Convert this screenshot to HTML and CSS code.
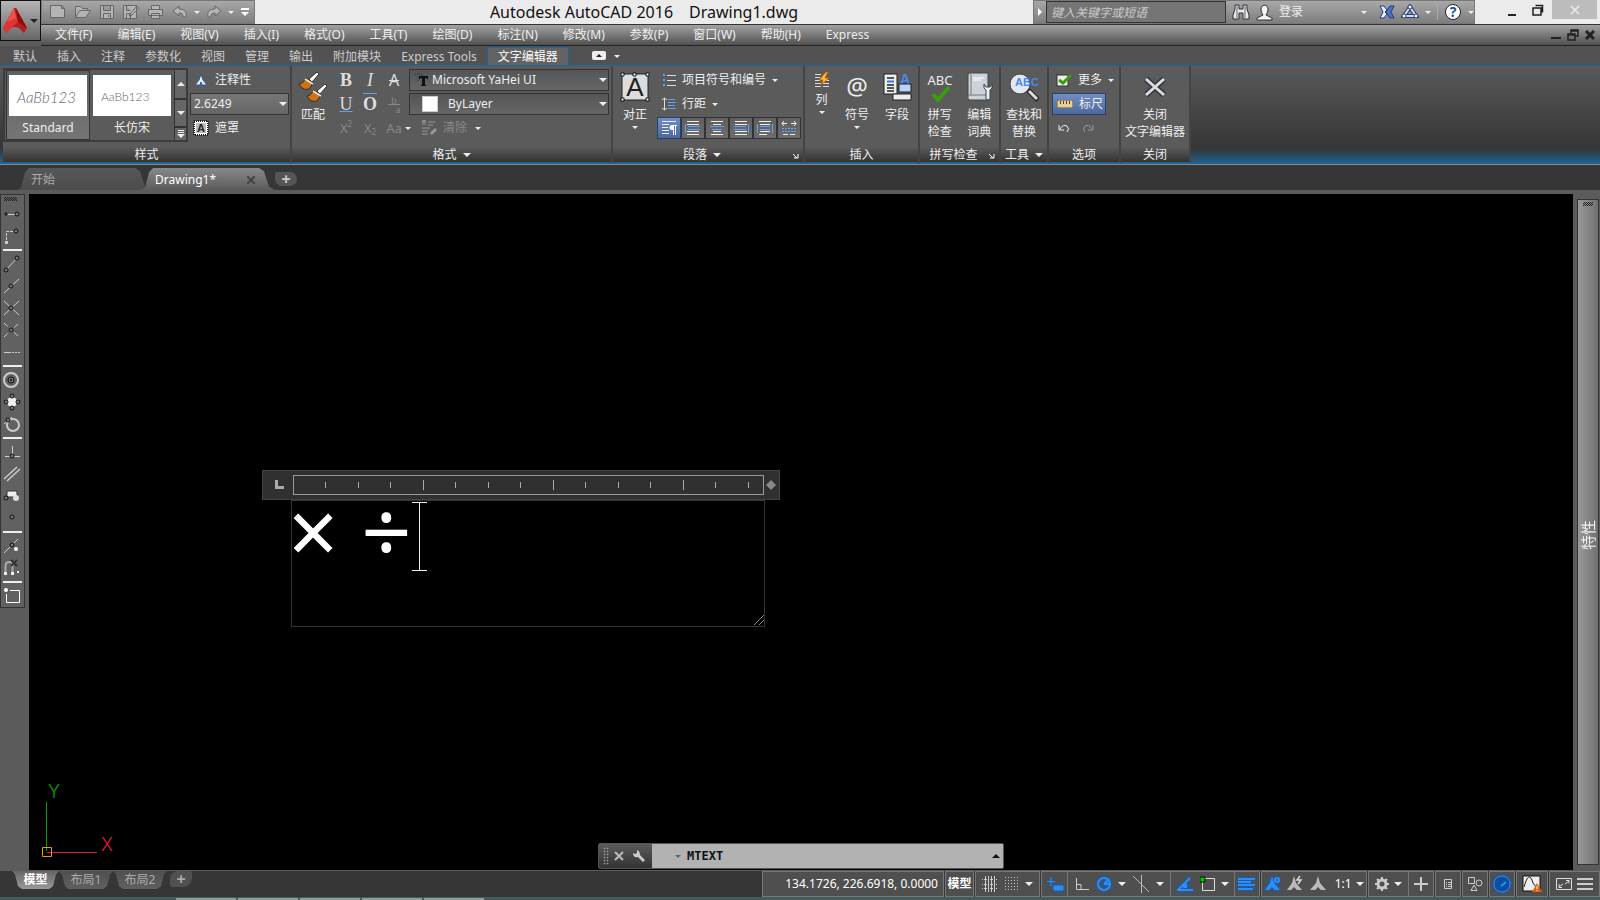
FILE: index.html
```html
<!DOCTYPE html>
<html lang="zh-CN">
<head>
    <meta charset="UTF-8">
    <title>Autodesk AutoCAD 2016 Drawing1.dwg</title>
    <link rel="stylesheet" href="styles.css">
</head>
<body>
<div class="app">
    <header class="top">
        <button class="app-button" aria-label="应用程序菜单">
            <svg width="24" height="26" viewBox="0 0 24 26"><path d="M11 0h2l11 20-3 5-5-5q-4-2-8 0l-5 5-3-5z" fill="#b81c1c"/><path d="M11 0L0 20l3 5 12-11z" fill="#de3434"/><path d="M11 0L4 14l9-4z" fill="#f05050"/><path d="M13 0l11 20-9-6z" fill="#8c0d0d"/></svg>
            <i class="caret dark"></i>
        </button>
        <div class="titlebar">
            <div class="quick">
                <button aria-label="新建"><svg width="18" height="16"><path d="M1.500 1.500h11l3 3v9h-14zM12.500 1.500v3h3" class="q"/></svg></button>
                <button aria-label="打开"><svg width="18" height="16"><path d="M1.500 13.500v-11h5l2 2h5v2M1.500 13.500l4-7h11l-5 7z" class="q"/></svg></button>
                <button aria-label="保存"><svg width="16" height="16"><path d="M1.500 1.500h13v13h-13zM4.500 1.500v5h7v-5M4.500 14.500v-5h7v5M9.500 11v2" class="q"/></svg></button>
                <button aria-label="另存为"><svg width="18" height="16"><path d="M1.500 1.500h13v13h-13zM4.500 1.500v5h4M4.500 14.500v-5h4v5M8 10l7-8 2 2-7 7-3 1z" class="q"/></svg></button>
                <button aria-label="打印"><svg width="18" height="16"><path d="M4.500 5.500v-4h8v4M1.500 5.500h14v6h-14zM4.500 9.500h8v5h-8z" class="q"/></svg></button>
                <button aria-label="放弃"><svg width="16" height="14"><path d="M1 6 7 1v3c6 0 8 3 7 8h-3c0-3-1-4-4-4v3z" class="q"/></svg></button>
                <i class="caret"></i>
                <button aria-label="重做"><svg width="16" height="14"><path d="M15 6 9 1v3C3 4 1 7 2 12h3c0-3 1-4 4-4v3z" class="q"/></svg></button>
                <i class="caret"></i>
                <button aria-label="自定义"><svg width="10" height="10"><path d="M1 1h8v2H1zM1 5h8L5 9z" fill="#fff"/></svg></button>
            </div>
            <h1 class="title"><span>Autodesk AutoCAD 2016</span><span>Drawing1.dwg</span></h1>
            <div class="info">
                <button class="info-toggle" aria-label="收拢"><svg width="6" height="10"><path d="M1 1l4 4-4 4z" fill="#fff"/></svg></button>
                <input class="search" type="text" placeholder="键入关键字或短语" aria-label="搜索">
                <button aria-label="查找"><svg width="18" height="18" viewBox="0 0 18 18"><path d="M3 2h4v4h4V2h4v4l2 6v4h-6v-6H7v6H1v-4l2-6z" fill="#e8e8e8" stroke="#2c3038"/><path d="M5 3v12M13 3v12" stroke="#667"/></svg></button>
                <button class="login"><svg width="17" height="17" viewBox="0 0 17 17"><path d="M5 5c0-5 7-5 7 0 0 3-1 4-2 6l6 3v2H1v-2l6-3C6 9 5 8 5 5z" fill="#f4f4f8" stroke="#2c3038"/></svg>登录</button>
                <i class="caret login-caret"></i>
                <button aria-label="Exchange"><svg width="16" height="16" viewBox="0 0 16 16"><path d="M1 2h4l3 4-2 2 2 2-3 4H1l3-6z" fill="#e6ecf8" stroke="#1f3c80"/><path d="M15 2h-4L7 8l4 6h4l-3-6z" fill="#4c74c4" stroke="#1f3c80"/></svg></button>
                <button aria-label="A360"><svg width="18" height="16" viewBox="0 0 18 16"><path d="M9 3 3 12h12z" fill="none" stroke="#243c74" stroke-width="4"/><path d="M9 3 3 12h12z" fill="none" stroke="#d8dcea" stroke-width="2"/><circle cx="9" cy="3" r="2" class="node"/><circle cx="3" cy="12" r="2" class="node"/><circle cx="15" cy="12" r="2" class="node"/></svg></button>
                <i class="caret"></i>
                <span class="divider"></span>
                <button aria-label="帮助"><svg width="18" height="18" viewBox="0 0 18 18"><circle cx="9" cy="9" r="7.500" fill="#fff" stroke="#223"/><text x="9" y="14" text-anchor="middle" class="help-mark">?</text></svg></button>
                <i class="caret"></i>
            </div>
            <div class="window-buttons">
                <button aria-label="最小化"><svg width="10" height="14"><path d="M1 11h8v2H1z" fill="#222"/></svg></button>
                <button aria-label="还原"><svg width="12" height="12"><path d="M1 4h8v7H1zM3.500 1.500h7v7" fill="none" stroke="#222" stroke-width="1.500"/></svg></button>
                <button class="close" aria-label="关闭"><svg width="10" height="10"><path d="M1 1l8 8M9 1l-8 8" stroke="#eee" stroke-width="1.500"/></svg></button>
            </div>
        </div>
        <nav class="menubar">
            <a href="#">文件(F)</a>
            <a href="#">编辑(E)</a>
            <a href="#">视图(V)</a>
            <a href="#">插入(I)</a>
            <a href="#">格式(O)</a>
            <a href="#">工具(T)</a>
            <a href="#">绘图(D)</a>
            <a href="#">标注(N)</a>
            <a href="#">修改(M)</a>
            <a href="#">参数(P)</a>
            <a href="#">窗口(W)</a>
            <a href="#">帮助(H)</a>
            <a href="#">Express</a>
            <div class="mdi">
                <button aria-label="最小化图形"><svg width="10" height="10"><path d="M0 7h10v2H0z" fill="#222"/></svg></button>
                <button aria-label="还原图形"><svg width="12" height="12"><path d="M1 5h7v6H1zM4 4V1h7v6H8M1 6h7M4 2h7" fill="none" stroke="#222" stroke-width="1.500"/></svg></button>
                <button aria-label="关闭图形"><svg width="10" height="10"><path d="M1 1l8 8M9 1l-8 8" stroke="#222" stroke-width="3"/></svg></button>
            </div>
        </nav>
    </header>

    <nav class="ribbon-tabs">
        <a href="#">默认</a>
        <a href="#">插入</a>
        <a href="#">注释</a>
        <a href="#">参数化</a>
        <a href="#">视图</a>
        <a href="#">管理</a>
        <a href="#">输出</a>
        <a href="#">附加模块</a>
        <a href="#">Express Tools</a>
        <a href="#" class="active">文字编辑器</a>
        <button class="minimize" aria-label="最小化功能区"><svg width="14" height="9"><rect width="14" height="9" rx="2" fill="#eee"/><path d="M4 6l3-3 3 3z" fill="#222"/></svg></button>
        <i class="caret"></i>
    </nav>

    <div class="ribbon">
        <section class="panel panel-style">
            <div class="body">
                <div class="gallery">
                    <button class="sample selected"><span class="preview slanted">AaBb123</span>Standard</button>
                    <button class="sample"><span class="preview narrow">AaBb123</span>长仿宋</button>
                    <div class="scroller">
                        <button aria-label="上一行"><i class="caret big up"></i></button>
                        <button aria-label="下一行"><i class="caret big"></i></button>
                        <button aria-label="展开"><svg width="8" height="8"><path d="M1 0h6v1H1zM1 2h6v1H1zM0 4h8L4 8z" fill="#eee"/></svg></button>
                    </div>
                </div>
                <div class="rows">
                    <button class="tool"><svg width="16" height="16" viewBox="0 0 16 16"><path d="M8 2l2 6 4 5H9l-1-3-1 3H2l4-5z" fill="#e4eefa" stroke="#2c5c94"/></svg>注释性</button>
                    <div class="combo"><select aria-label="文字高度"><option>2.6249</option></select></div>
                    <button class="tool"><svg width="16" height="16" viewBox="0 0 16 16"><rect x="1" y="1" width="14" height="14" fill="#fff" stroke="#222" stroke-dasharray="1 1" stroke-width="2"/><rect x="3" y="3" width="10" height="10" fill="#bbb"/><text x="8" y="12" text-anchor="middle" class="mask-letter">A</text></svg>遮罩</button>
                </div>
            </div>
            <h2>样式</h2>
        </section>

        <section class="panel panel-format">
            <div class="body">
                <button class="big-tool"><svg width="30" height="30" viewBox="0 0 30 30"><g id="brush"><path d="M19 0l2 2-7 8-3-3z" fill="#fff" stroke="#333"/><path d="M8 6l7 5-3 5c-4 3-8 1-11-4 3 0 5-3 7-6z" fill="#c8741a" stroke="#4a2808"/><path d="M7 7l8 5" stroke="#ddd" stroke-width="2"/></g><use href="#brush" x="8" y="12"/></svg><span>匹配</span></button>
                <div class="letters">
                    <button class="bold">B</button>
                    <button class="italic">I</button>
                    <button class="strike">A</button>
                    <button class="under">U</button>
                    <button class="over">O</button>
                    <button class="dim stack"><span>b</span><span>a</span></button>
                    <button class="dim">X<sup>2</sup></button>
                    <button class="dim">X<sub>2</sub></button>
                    <button class="dim">Aa</button>
                </div>
                <div class="rows">
                    <div class="combo font"><svg width="14" height="14" viewBox="0 0 14 14"><path d="M0 3V1h7v2M3 1v8" stroke="#333" stroke-dasharray="1 1" fill="none"/><path d="M4 3h9v3h-1l-1-1h-1v7h1v1H6v-1h1V5H6L5 6H4z" fill="#111"/></svg><select aria-label="字体"><option>Microsoft YaHei UI</option></select></div>
                    <div class="combo font color"><span class="swatch"></span><select aria-label="颜色"><option>ByLayer</option></select></div>
                    <div class="line dim"><i class="caret"></i><button class="tool"><svg width="16" height="16"><path d="M2 0v5M4 0v5M1 1h4M7 2h7M7 5h5M1 8h8M1 11h6M1 14h6" stroke="#999" fill="none"/><path d="M9 13l5-5 2 2-5 5z" fill="#999"/></svg>清除</button><i class="caret"></i></div>
                </div>
            </div>
            <h2>格式 <i class="caret big"></i></h2>
        </section>

        <section class="panel panel-para">
            <div class="body">
                <button class="big-tool"><svg width="30" height="30" viewBox="0 0 30 30"><rect x="2" y="2" width="26" height="26" fill="#ddd" stroke="#222"/><text x="15" y="24" text-anchor="middle" class="justify-letter">A</text><path d="M1 1h3v3H1zM13 1h3v3h-3zM26 1h3v3h-3zM1 26h3v3H1zM26 26h3v3h-3z" fill="#fff" stroke="#111"/></svg><span>对正</span><i class="caret"></i></button>
                <div class="rows">
                    <button class="tool"><svg width="14" height="14"><path d="M1 2h2M1 7h2M1 12h2" stroke="#63a0f0" stroke-width="2"/><path d="M5 2.500h9M5 7.500h9M5 12.500h9" stroke="#ddd"/></svg>项目符号和编号 <i class="caret"></i></button>
                    <button class="tool"><svg width="14" height="14"><path d="M2.500 1v12M0 3l2.500-2L5 3M0 11l2.500 2L5 11" stroke="#ddd" fill="none"/><path d="M6 2.500h7M6 5.500h8M6 8.500h7M6 11.500h8" stroke="#63a0f0"/></svg>行距 <i class="caret"></i></button>
                    <div class="aligns">
                        <button class="on" aria-label="默认"><svg width="16" height="16"><path d="M1 1.500h14M1 4.500h7M1 7.500h6M1 10.500h7M1 13.500h7" stroke="#eee"/><path d="M11 5h2v5h-2a2 2 0 0 1 0-5z" fill="#fff"/><path d="M10 5.500h6M12.500 6v9M14.500 6v9" stroke="#fff" fill="none"/></svg></button>
                        <button aria-label="左对齐"><svg width="16" height="16"><path d="M2 1.500h12M2 4.500h12M2 11.500h12M2 14.500h12" stroke="#eee"/><path d="M.500 4v9M3 6.500h12M3 9.500h12" stroke="#63a0f0"/></svg></button>
                        <button aria-label="居中"><svg width="16" height="16"><path d="M2 1.500h12M4 4.500h8M4 11.500h8M2 14.500h12" stroke="#eee"/><path d="M1 6.500h14M3 9.500h10" stroke="#63a0f0"/></svg></button>
                        <button aria-label="右对齐"><svg width="16" height="16"><path d="M2 1.500h12M2 4.500h12M2 11.500h12M2 14.500h12" stroke="#eee"/><path d="M15.500 4v9M1 6.500h12M1 9.500h12" stroke="#63a0f0"/></svg></button>
                        <button aria-label="对正"><svg width="16" height="16"><path d="M2 1.500h12M3 4.500h10M3 11.500h10M2 14.500h8" stroke="#eee"/><path d="M.500 4v9M15.500 4v9M3 6.500h10M3 9.500h10" stroke="#63a0f0"/></svg></button>
                        <button aria-label="分散对齐"><svg width="16" height="16"><path d="M1 3.500h5M10 3.500h5M3 1L1 3.500 3 6M13 1l2 2.500L13 6M2 14.500h5M9 14.500h5" stroke="#eee" fill="none"/><path d="M1 8.500h14M1 11.500h14" stroke="#63a0f0" stroke-dasharray="2 1"/></svg></button>
                    </div>
                </div>
            </div>
            <h2>段落 <i class="caret big"></i><svg class="launcher" width="6" height="6"><path d="M0 1l4 4M5 1v4H1" stroke="#fff" fill="none"/></svg></h2>
        </section>

        <section class="panel panel-insert">
            <div class="body">
                <button class="big-tool short"><svg width="16" height="16"><path d="M1 2.500h6M1 5.500h5M1 8.500h5M1 11.500h6M1 14.500h6M10 8.500h5M9 11.500h6M9 14.500h6" stroke="#ddd"/><path d="M12 0L5 8h4l-2 5 8-7h-4l3-6z" fill="#ffc040" stroke="#c86000"/></svg><span>列</span><i class="caret"></i></button>
                <button class="big-tool"><span class="at">@</span><span>符号</span><i class="caret"></i></button>
                <button class="big-tool"><svg width="30" height="30" viewBox="0 0 30 30"><rect x="2" y="2" width="13" height="20" fill="#eee" stroke="#222"/><path d="M5 6h7M5 13h7M5 16h7M5 19h7" stroke="#555" stroke-width="2"/><path d="M5 9.500h7" stroke="#3878e0" stroke-width="2"/><text x="23" y="12" text-anchor="middle" class="field-letter">A</text><path d="M17 12h12v8H17z" fill="#b8d4f8" stroke="#222"/><path d="M11 22h18v6H11z" fill="#eee" stroke="#222"/></svg><span>字段</span></button>
            </div>
            <h2>插入</h2>
        </section>

        <section class="panel panel-spell">
            <div class="body">
                <button class="big-tool"><svg width="30" height="30" viewBox="0 0 30 30"><text x="15" y="13" text-anchor="middle" class="abc">ABC</text><path d="M8 22l5 6L24 15" stroke="#3a9a10" stroke-width="4" fill="none"/></svg><span>拼写<br>检查</span></button>
                <button class="big-tool"><svg width="30" height="30" viewBox="0 0 30 30"><path d="M4 3q0-2 2-2h18v27H6q-3 0-2-3z" fill="#ccd2da" stroke="#444"/><path d="M4 25q0-2 2-2h18M7 2v21" stroke="#777" fill="none"/><path d="M9 6h11M9 8h8" stroke="#fff"/><path d="M20 12v4l2 2v9q2 2 4 0v-9l2-2v-4l-2 3h-4z" fill="#eee" stroke="#345"/></svg><span>编辑<br>词典</span></button>
            </div>
            <h2>拼写检查<svg class="launcher" width="6" height="6"><path d="M0 1l4 4M5 1v4H1" stroke="#fff" fill="none"/></svg></h2>
        </section>

        <section class="panel panel-tools">
            <div class="body">
                <button class="big-tool"><svg width="30" height="30" viewBox="0 0 30 30"><path d="M19 18l10 10" stroke="#222" stroke-width="5"/><path d="M20 19l8 8" stroke="#ddd" stroke-width="3"/><circle cx="11" cy="12" r="10" fill="#e2e8ee" stroke="#444"/><text x="18" y="14" text-anchor="middle" class="find-letters">ABC</text></svg><span>查找和<br>替换</span></button>
            </div>
            <h2>工具 <i class="caret big"></i></h2>
        </section>

        <section class="panel panel-options">
            <div class="body">
                <div class="rows">
                    <button class="tool"><svg width="16" height="14"><rect x="1" y="2" width="11" height="11" fill="#eee" stroke="#333"/><path d="M3 7l4 3 8-8" stroke="#3a9a10" stroke-width="3" fill="none"/></svg>更多 <i class="caret"></i></button>
                    <button class="tool on"><svg width="16" height="8"><rect width="16" height="8" fill="#e8cf98" stroke="#634b20"/><path d="M3.500 1v3M6.500 1v3M9.500 1v3M12.500 1v3" stroke="#543"/></svg>标尺</button>
                    <div class="line undo">
                        <button aria-label="放弃"><svg width="12" height="10"><path d="M1 2v5h5M2 6q3-5 7-3 3 3 0 6" stroke="#eee" fill="none"/></svg></button>
                        <button class="dim" aria-label="重做"><svg width="12" height="10"><path d="M11 2v5H6M10 6Q7 1 3 3 0 6 3 9" stroke="#999" fill="none"/></svg></button>
                    </div>
                </div>
            </div>
            <h2>选项</h2>
        </section>

        <section class="panel panel-close">
            <div class="body">
                <button class="big-tool"><svg width="30" height="30" viewBox="0 0 30 30"><path d="M6 7l18 16M24 7L6 23" stroke="#333840" stroke-width="6"/><path d="M6 7l18 16M24 7L6 23" stroke="#ddd" stroke-width="3"/></svg><span>关闭<br>文字编辑器</span></button>
            </div>
            <h2>关闭</h2>
        </section>
    </div>

    <nav class="file-tabs">
        <a href="#" class="file-tab">开始</a>
        <a href="#" class="file-tab active">Drawing1*<svg width="8" height="8"><path d="M0 0l8 8M8 0L0 8" stroke="#444" stroke-width="2"/></svg></a>
        <button class="new-tab" aria-label="新图形">+</button>
    </nav>

    <main class="workspace">
        <aside class="snap-bar">
            <span class="grip"></span>
            <button aria-label="临时追踪点"><svg width="18" height="18"><path d="M3 9.500h9" class="s"/><path d="M2 8h2v2H2z" class="n"/><circle cx="14" cy="9" r="2" class="n"/></svg></button>
            <button aria-label="捕捉自"><svg width="18" height="18"><path d="M3.500 13V4.500H12" class="s" stroke-dasharray="3 1"/><path d="M2 14h3v3H2z" fill="#ccc"/><circle cx="13" cy="4" r="2" class="n"/></svg></button>
            <hr>
            <button aria-label="端点"><svg width="18" height="18"><path d="M3 15L14 3" class="s"/><circle cx="3" cy="15" r="2" class="n"/><circle cx="14" cy="3" r="2" class="n"/></svg></button>
            <button aria-label="中点"><svg width="18" height="18"><path d="M1 16L16 2" class="s"/><circle cx="8" cy="9" r="2" class="n"/></svg></button>
            <button aria-label="交点"><svg width="18" height="18"><path d="M1 2l15 14M1 16L16 2" class="s"/><circle cx="8" cy="9" r="2" class="n"/></svg></button>
            <button aria-label="外观交点"><svg width="18" height="18"><path d="M1 2l15 14M1 16L16 2" class="s" stroke-dasharray="5 2"/><circle cx="8" cy="9" r="2" class="n"/></svg></button>
            <button aria-label="延长线"><svg width="18" height="18"><path d="M1 9.500h7M9 9.500h2M12 9.500h2M15 9.500h2" class="s"/></svg></button>
            <hr>
            <button aria-label="圆心"><svg width="18" height="18"><circle cx="8" cy="9" r="7" class="s" stroke-width="2"/><circle cx="8" cy="9" r="3" class="n"/><circle cx="8" cy="9" r="1" fill="#000"/></svg></button>
            <button aria-label="象限点"><svg width="18" height="18"><circle cx="9" cy="9" r="5" fill="#eee"/><circle cx="9" cy="3" r="2" class="n"/><circle cx="9" cy="15" r="2" class="n"/><circle cx="3" cy="9" r="2" class="n"/><circle cx="15" cy="9" r="2" class="n"/></svg></button>
            <button aria-label="切点"><svg width="18" height="18"><circle cx="10" cy="10" r="6" class="s" stroke-width="2"/><path d="M1 9l8-7" class="s"/><circle cx="5" cy="5" r="2" class="n"/></svg></button>
            <hr>
            <button aria-label="垂足"><svg width="18" height="18"><path d="M9.500 3v10M2 13.500h15" class="s"/><circle cx="9" cy="13" r="2" class="n"/></svg></button>
            <button aria-label="平行线"><svg width="18" height="18"><path d="M1 14L14 2M4 16L17 4" class="s" stroke-width="1.500"/></svg></button>
            <button aria-label="插入点"><svg width="18" height="18"><path d="M4 4h10v6H4z" fill="#eee" stroke="#333"/><circle cx="3" cy="11" r="2" class="n"/><circle cx="13" cy="11" r="3" fill="#ddd"/></svg></button>
            <button aria-label="节点"><svg width="18" height="18"><circle cx="9" cy="8" r="2" class="n"/></svg></button>
            <hr>
            <button aria-label="最近点"><svg width="18" height="18"><path d="M1 16L15 2" class="s"/><circle cx="9" cy="8" r="2" class="n"/><circle cx="13" cy="12" r="2" fill="#fff"/></svg></button>
            <button aria-label="无捕捉"><svg width="18" height="18"><path d="M2.500 15V7q0-4 4-4M9.500 15V7q0-4-3-4" stroke="#aaa" stroke-width="2" fill="none"/><path d="M1 13h3v3H1zM8 13h3v3H8zM14 12h2v2h-2z" fill="#eee"/><path d="M8 1l6 6M14 1L8 7" stroke="#333" stroke-width="2"/></svg></button>
            <hr>
            <button aria-label="对象捕捉设置"><svg width="18" height="18"><path d="M7 3.500h9.500v12H3.500V7" class="bright"/><circle cx="3" cy="3" r="2" fill="#fff"/></svg></button>
        </aside>

        <div class="canvas">
            <div class="mtext">
                <div class="ruler">
                    <svg width="10" height="10"><path d="M1 0v9h9V6H4V0z" fill="#aaa"/></svg>
                    <div class="scale"></div>
                    <svg width="10" height="10"><path d="M5 0l5 5-5 5-5-5z" fill="#888"/></svg>
                </div>
                <textarea class="editor" aria-label="多行文字" spellcheck="false">× ÷</textarea>
                <svg class="text-cursor" width="15" height="69"><path d="M0 .500h15M0 68.500h15M7.500 0v69" stroke="#eee"/></svg>
                <svg class="grow" width="10" height="10"><path d="M0 10L10 0M5 10l5-5" stroke="#888"/></svg>
            </div>

            <svg class="ucs" width="80" height="90" viewBox="0 -10 80 90">
                <path d="M7.500 19v49" stroke="#00a000"/>
                <path d="M8 69.500h50" stroke="#e02020"/>
                <path d="M3.500 64.500h9v9h-9z" stroke="#e8a000" fill="none"/>
                <text x="15" y="15" text-anchor="middle" fill="#00a000">Y</text>
                <text x="68" y="68" text-anchor="middle" fill="#e02020">X</text>
            </svg>

            <div class="command">
                <span class="grip"></span>
                <button aria-label="关闭命令行"><svg width="10" height="10"><path d="M1 1l8 8M9 1L1 9" stroke="#bbb" stroke-width="2"/></svg></button>
                <button aria-label="自定义"><svg width="14" height="14"><path d="M5 1v3L3 5 1 4q0 5 5 4l5 5 2-2-5-5q0-4-3-5z" fill="#ccc"/></svg></button>
                <div class="prompt">
                    <i class="caret"></i>
                    <input type="text" value="MTEXT" aria-label="命令">
                    <i class="caret big up"></i>
                </div>
            </div>
        </div>

        <aside class="palette">
            <span class="grip"></span>
            <span class="palette-title">特性</span>
        </aside>
    </main>

    <footer class="status">
        <nav class="layouts">
            <a href="#" class="active">模型</a>
            <a href="#">布局1</a>
            <a href="#">布局2</a>
            <button class="add-layout" aria-label="新建布局">+</button>
        </nav>
        <div class="cell coords">134.1726, 226.6918, 0.0000</div>
        <div class="cell"><button class="model">模型</button></div>
        <div class="cell">
            <button aria-label="栅格"><svg width="16" height="16"><path d="M3.500 0v16M6.500 0v16M9.500 0v16M12.500 0v16" stroke="#ccc"/><path d="M0 3.500h16M0 8.500h16M0 12.500h16" stroke="#ccc" stroke-dasharray="1 1"/></svg></button>
            <button aria-label="捕捉"><svg width="16" height="16"><path d="M1 1.500h14M1 4.500h14M1 7.500h14M1 10.500h14M1 13.500h14" stroke="#ccc" stroke-dasharray="1 2"/></svg></button>
            <i class="caret big"></i>
        </div>
        <div class="cell joined">
            <button class="lit" aria-label="动态输入"><svg width="18" height="16"><path d="M5 1v9M1 5.500h8M8 10h9v4H8z" stroke="#2690ff" fill="#2690ff"/></svg></button>
        </div>
        <div class="cell joined snaps">
            <button aria-label="正交"><svg width="16" height="16"><path d="M2.500 2v11.500H15M3 8.500h4v5" stroke="#ccc" fill="none"/></svg></button>
            <button class="lit" aria-label="极轴"><svg width="16" height="16"><circle cx="8" cy="8" r="6" class="b"/><path d="M8 8h7M8 8l5-5" class="b"/></svg></button>
            <i class="caret big"></i>
            <button aria-label="等轴测"><svg width="18" height="18"><path d="M9.500 0v18M1 1l16 16" stroke="#bbb"/></svg></button>
            <i class="caret big"></i>
        </div>
        <div class="cell joined osnap">
            <button class="lit" aria-label="对象捕捉追踪"><svg width="18" height="16"><path d="M2 14L14 2M1 14h16" class="b"/><path d="M7 8h4v4H7z" fill="#2690ff"/></svg></button>
            <button aria-label="对象捕捉"><svg width="16" height="16"><path d="M2.500 2.500h12v12h-12z" stroke="#ddd" fill="none"/><path d="M0 1h5v5H0z" fill="#00c800" stroke="#111"/></svg></button>
            <i class="caret big"></i>
        </div>
        <div class="cell">
            <button class="lit" aria-label="线宽"><svg width="18" height="14"><path d="M0 2h17M0 5h13M0 8h17M0 12h15" class="b"/></svg></button>
        </div>
        <div class="cell notes">
            <button class="lit" aria-label="注释可见性"><svg width="18" height="18"><path d="M8 1l2 7 6 7h-5l-3-3-3 3H1l5-7z" fill="#2690ff"/><circle cx="13" cy="5" r="2" class="b"/></svg></button>
            <button aria-label="自动缩放"><svg width="18" height="18"><path d="M8 1l2 7 6 7h-5l-3-3-3 3H1l5-7z" fill="#bbb"/><path d="M14 1l-3 4h4l-3 4" stroke="#ddd" stroke-width="1.500" fill="none"/></svg></button>
            <button aria-label="注释比例"><svg width="18" height="18"><path d="M9 1l2 7 6 7h-5l-3-3-3 3H1l6-7z" fill="#bbb"/></svg></button>
            <button class="ratio">1:1</button>
            <i class="caret big"></i>
        </div>
        <div class="cell joined"><button aria-label="切换工作空间"><svg width="14" height="14"><circle cx="7" cy="7" r="4" fill="none" stroke="#ccc" stroke-width="3"/><path d="M7 0v3M7 11v3M0 7h3M11 7h3M2 2l2 2M10 10l2 2M12 2l-2 2M4 10l-2 2" stroke="#ccc" stroke-width="2"/></svg></button><i class="caret big"></i></div>
        <div class="cell"><button aria-label="注释监视器"><svg width="14" height="14"><path d="M7 0v14M0 7h14" stroke="#ccc" stroke-width="2"/></svg></button></div>
        <div class="cell"><button aria-label="快捷特性"><svg width="10" height="12"><path d="M1.500 1.500h7v9h-7zM3 4.500h1M5 4.500h3M3 6.500h1M5 6.500h3M3 8.500h1M5 8.500h3" stroke="#ccc" fill="none"/></svg></button></div>
        <div class="cell"><button aria-label="隔离对象"><svg width="16" height="16"><path d="M1.500 1.500h6v6h-6zM4 14.500h6L7 9z" stroke="#ccc" fill="none"/><circle cx="12" cy="7" r="3" stroke="#ccc" fill="none"/></svg></button></div>
        <div class="cell"><button class="lit" aria-label="硬件加速"><svg width="18" height="18"><circle cx="9" cy="9" r="8" fill="#0d4e9c" stroke="#2690ff"/><path d="M8 11l5-4" class="b"/></svg></button></div>
        <div class="cell wide"><button aria-label="系统监视"><svg width="20" height="18"><rect x="1" y="1" width="17" height="15" fill="#eee" stroke="#111"/><path d="M2 12q5-18 9-4l3 4" stroke="#222" fill="none"/><path d="M15 8l5 9H10z" fill="#e06010"/><path d="M15 11v3M15 15v1" stroke="#fff"/></svg></button></div>
        <div class="cell last"><button aria-label="全屏显示"><svg width="16" height="12"><path d="M.500 .500h15v11H.500zM9 6l4-3M10 2.500h3v3M7 6L3 9M3 6v3.500h3" stroke="#ddd" fill="none"/></svg></button><button aria-label="自定义"><svg width="16" height="14"><path d="M0 2h16M0 7h16M0 12h16" stroke="#ccc" stroke-width="2"/></svg></button></div>
    </footer>
    <div class="taskbar"><span></span><span></span><span></span><span></span><span></span></div>
</div>
</body>
</html>
```

FILE: styles.css
```css
* {
    box-sizing: border-box;
}

body {
    margin: 0;
    font: 12px/16px "Noto Sans", "Noto Sans CJK SC", sans-serif;
    color: #eee;
    background-color: #5b5b5b;
}

button,
input,
select,
textarea {
    font: inherit;
    color: inherit;
    background: none;
    border: 0;
    padding: 0;
    margin: 0;
    border-radius: 0;
}

button {
    display: flex;
    align-items: center;
    justify-content: center;
    white-space: nowrap;
}

a {
    color: inherit;
    text-decoration: none;
    white-space: nowrap;
}

svg {
    display: block;
    flex: none;
}

.app {
    display: flex;
    flex-direction: column;
    height: 100vh;
    overflow: hidden;
}

.caret {
    flex: none;
    border: 3px solid transparent;
    border-top-color: #eee;
    border-bottom: 0;
}

.caret.big {
    border-width: 4px;
    border-bottom: 0;
}

.caret.up {
    border-top: 0;
    border-bottom: 4px solid #eee;
}

.caret.dark {
    border-width: 4px 4px 0;
    border-top-color: #222;
}

.grip {
    background: repeating-conic-gradient(#222 0 25%, transparent 0 50%) 0 0 / 2px 2px;
}

/* Title bar and menu */
.top {
    display: grid;
    grid-template: 24px 22px / 41px 1fr;
}

.app-button {
    grid-row: 1 / 3;
    align-self: start;
    height: 41px;
    border: 1px solid #111;
    background: linear-gradient(#b5b5b5, #666);
    gap: 3px;
}

.titlebar {
    display: flex;
    background-color: #ebebeb;
}

.quick,
.info {
    display: flex;
    align-items: center;
    background: linear-gradient(#a8a8a8, #7e7e7e);
    border: 1px solid #777;
}

.quick {
    width: 214px;
    padding-left: 7px;
    gap: 7px;
}

.quick .caret {
    margin: 0 -1px;
}

.q {
    fill: #b4b4b4;
    stroke: #666;
}

.title {
    flex: 1;
    display: flex;
    justify-content: center;
    gap: 16px;
    margin: 0;
    font-size: 16px;
    font-weight: 400;
    line-height: 25px;
    color: #111;
}

.info {
    width: 442px;
    gap: 6px;
}

.info-toggle {
    width: 12px;
    margin-right: -6px;
}

.search {
    width: 180px;
    height: 22px;
    padding-left: 4px;
    border: 1px solid #333;
    background-color: #757575;
    font-style: italic;
}

.search::placeholder {
    color: #ccc;
}

.info .login {
    gap: 6px;
}

.login-caret {
    margin: 0 6px 0 auto;
}

.node {
    fill: #fff;
    stroke: #243c74;
}

.help-mark {
    font: bold 14px "Noto Sans", sans-serif;
    fill: #1850b0;
}

.divider {
    width: 1px;
    height: 16px;
    background-color: #aaa;
}

.window-buttons {
    display: flex;
    width: 122px;
    height: 19px;
    justify-content: flex-end;
    gap: 15px;
    margin-right: 3px;
}

.window-buttons .close {
    width: 45px;
    margin-left: -7px;
    background-color: #bcbcbc;
}

.menubar {
    display: flex;
    align-items: center;
    padding-left: 2px;
    border-top: 1px solid #333;
    border-bottom: 1px solid #222;
    background: linear-gradient(#a2a2a2, #505050);
}

.menubar a {
    padding: 0 13px 0 12px;
}

.mdi {
    display: flex;
    gap: 6px;
    margin-left: auto;
    padding-right: 5px;
}

/* Ribbon */
.ribbon-tabs {
    display: flex;
    align-items: flex-end;
    height: 20px;
    padding-left: 3px;
    border-bottom: 1px solid #1f6496;
    background-color: #525252;
    color: #ccc;
}

.ribbon-tabs a {
    padding: 0 10px;
    line-height: 17px;
}

.ribbon-tabs a.active {
    border: 1px solid #1f6496;
    border-bottom: 0;
    background-color: #636363;
    color: #fff;
}

.ribbon-tabs > .caret {
    margin-bottom: 7px;
}

.minimize {
    margin: 0 8px 5px 23px;
}

.ribbon {
    display: flex;
    height: 99px;
    padding-left: 3px;
    border-bottom: 1px solid #888;
    background: linear-gradient(#5a5a5a, #353535 84%, #1f6496);
}

.panel {
    display: flex;
    flex-direction: column;
    border-right: 2px solid #444;
    border-bottom: 2px solid #1f6496;
    background-color: #5b5b5b;
}

.panel .body {
    display: flex;
    height: 81px;
    padding-top: 2px;
}

.panel h2 {
    flex: 1;
    display: flex;
    align-items: center;
    justify-content: center;
    position: relative;
    gap: 6px;
    margin: 0;
    font-size: 12px;
    font-weight: 400;
    line-height: 14px;
    background: linear-gradient(#5b5b5b, #333);
}

.panel-para h2,
.panel-spell h2 {
    padding-right: 12px;
}

.launcher {
    position: absolute;
    right: 4px;
    bottom: 3px;
}

.panel-style { width: 289px; }
.panel-format { width: 321px; }
.panel-para { width: 192px; }
.panel-insert { width: 115px; }
.panel-spell { width: 81px; }
.panel-tools { width: 48px; }
.panel-options { width: 72px; }
.panel-close { width: 70px; }

.gallery {
    display: flex;
    width: 185px;
    height: 74px;
    padding-left: 1px;
    border: 2px solid #3c3c3c;
}

.sample {
    flex-direction: column;
    justify-content: flex-start;
    width: 84px;
    padding-top: 5px;
    gap: 4px;
}

.sample.selected {
    border: 1px solid #333;
    background: linear-gradient(#606060, #757575);
    padding-top: 4px;
}

.preview {
    width: 78px;
    height: 41px;
    padding-left: 8px;
    background-color: #fff;
    color: #666;
    text-align: left;
    line-height: 44px;
}

.slanted {
    font-family: Lato, sans-serif;
    font-style: italic;
    font-weight: 300;
    font-size: 15px;
}

.narrow {
    font-family: Lato, sans-serif;
    font-size: 12px;
    font-weight: 300;
}

.scroller {
    flex: 1;
    display: grid;
    grid-template-rows: 28px 28px 1fr;
    background-color: #666;
    border-left: 1px solid #333;
}

.scroller button + button {
    border-top: 2px solid #333;
}

.rows {
    flex: 1;
    display: grid;
    grid-template-rows: repeat(3, 24px);
    align-items: center;
}

.tool {
    gap: 6px;
    justify-content: flex-start;
}

.panel-style .rows {
    padding: 0 1px 0 2px;
}

.panel-style .tool {
    padding-left: 3px;
}

.combo {
    display: flex;
    align-items: center;
    position: relative;
    height: 22px;
    border: 1px solid #333;
    background: linear-gradient(#777, #666);
}

.combo select {
    flex: 1;
    appearance: none;
    padding-left: 3px;
}

.combo::after {
    content: "";
    margin-right: 1px;
    border: 4px solid transparent;
    border-top-color: #eee;
    border-bottom: 0;
}

.combo.font {
    padding-left: 5px;
    background: linear-gradient(#555, #666);
}

.combo.color {
    padding-left: 12px;
}

.combo.color select {
    padding-left: 10px;
}

.swatch {
    width: 16px;
    height: 16px;
    background-color: #fff;
    border: 1px solid #ccc;
}

.big-tool {
    flex: 1;
    flex-direction: column;
    justify-content: flex-start;
    padding-top: 4px;
    line-height: 17px;
    text-align: center;
}

.big-tool > span:not(.at) {
    margin-top: 4px;
}

.big-tool .caret {
    margin-top: 3px;
}

.big-tool.short > span {
    margin-top: 3px;
}

.panel-insert .big-tool {
    flex: 0 0 38px;
}

.panel-insert .big-tool.short {
    flex-basis: 33px;
}

.panel-insert .big-tool:last-child {
    flex-basis: 42px;
}

.at {
    height: 30px;
    font-size: 24px;
    line-height: 28px;
}

.panel-format .big-tool {
    flex: 0 0 42px;
}

.letters {
    display: grid;
    grid-template: repeat(3, 24px) / repeat(3, 24px);
    width: 75px;
    font-size: 13px;
}

.letters .bold,
.letters .italic,
.letters .strike,
.letters .under,
.letters .over {
    font: bold 18px/20px "Liberation Serif", serif;
    color: #ddd;
}

.letters .italic {
    font-style: italic;
    font-weight: 400;
}

.letters .strike {
    font-family: "Noto Sans", sans-serif;
    font-size: 16px;
    font-weight: 400;
    text-decoration: line-through;
}

.letters .under {
    font-weight: 400;
    text-decoration: underline #63a0f0;
}

.letters .over {
    text-decoration: overline #63a0f0;
}

.letters sup,
.letters sub {
    font-size: 8px;
    line-height: 8px;
}

.letters sup {
    margin-bottom: 8px;
}

.letters sub {
    margin-top: 8px;
}

.dim {
    color: #888;
}

.letters .stack {
    flex-direction: column;
    font: 11px/8px "Liberation Serif", serif;
}

.stack span + span {
    padding-left: 8px;
    border-top: 1px solid #888;
}

.panel-format .rows {
    padding-right: 2px;
}

.line {
    display: flex;
    align-items: center;
    gap: 7px;
}

.line.dim {
    gap: 8px;
}

.line.dim .caret:first-child {
    margin: 0 2px 0 -4px;
}

.panel-para .big-tool {
    flex: 0 0 44px;
}

.panel-para .tool {
    padding-left: 5px;
}

.aligns {
    display: grid;
    grid-template-columns: repeat(6, 24px);
    height: 22px;
}

.aligns button {
    border: 1px solid #333;
    background: linear-gradient(#606060, #6c6c6c);
}

.aligns .on,
.tool.on {
    background: linear-gradient(#6f8fc4, #4c689c);
    border: 1px solid #28406c;
}

.abc {
    font: 13px "Noto Sans", sans-serif;
    fill: #eee;
}

.mask-letter {
    font: bold 11px "Liberation Sans", sans-serif;
    fill: #222;
}

.justify-letter {
    font: 26px "Liberation Sans", sans-serif;
    fill: #222;
}

.field-letter {
    font: bold 14px "Liberation Sans", sans-serif;
    fill: #4888f0;
}

.find-letters {
    font: bold 11px "Liberation Sans", sans-serif;
    fill: #4888f0;
}

.panel-options .rows {
    padding-left: 3px;
}

.panel-options .tool {
    padding-left: 4px;
}

.tool.on {
    width: 54px;
    height: 22px;
}

.undo {
    padding-left: 6px;
    gap: 12px;
}

/* File tabs */
.file-tabs {
    display: flex;
    align-items: flex-end;
    height: 29px;
    padding-left: 17px;
    border-bottom: 4px solid #5b5b5b;
    background-color: #363636;
}

.file-tab {
    display: flex;
    align-items: center;
    justify-content: space-between;
    width: 134px;
    height: 22px;
    margin-right: -10px;
    padding: 2px 20px 0 14px;
    background: linear-gradient(#585858, #4c4c4c);
    clip-path: polygon(0 100%, 4px 90%, 8px 20%, 12px 0, calc(100% - 16px) 0, calc(100% - 11px) 15%, calc(100% - 6px) 85%, 100% 100%);
    color: #aaa;
}

.file-tab.active {
    background: linear-gradient(#888, #5b5b5b);
    color: #fff;
}

.new-tab {
    width: 22px;
    height: 14px;
    margin: 0 0 4px 10px;
    border-radius: 2px 8px 8px;
    background-color: #555;
    font-size: 16px;
    font-weight: 700;
    color: #ccc;
}

/* Drawing area */
.workspace {
    flex: 1;
    display: flex;
    min-height: 0;
}

.snap-bar {
    display: flex;
    flex-direction: column;
    align-self: flex-start;
    width: 25px;
    margin-right: 4px;
    padding: 0 3px 0 2px;
    border: 1px solid #333;
    background-color: #616161;
}

.snap-bar .grip {
    height: 4px;
    margin: 2px 4px 2px 1px;
}

.snap-bar button {
    height: 22px;
}

.snap-bar hr {
    width: 19px;
    height: 2px;
    margin: 2px 0;
    border: 0;
    background-color: #eee;
}

.s {
    stroke: #ccc;
    fill: none;
}

.n {
    stroke: #111;
    fill: #777;
}

.bright {
    stroke: #fff;
    fill: none;
}

.canvas {
    flex: 1;
    position: relative;
    background-color: #000;
}

.mtext {
    position: absolute;
    left: 233px;
    top: 276px;
    width: 518px;
}

.ruler {
    display: flex;
    align-items: center;
    height: 30px;
    padding: 0 3px 0 11px;
    border: 1px solid #444;
    background-color: #303030;
}

.scale {
    flex: 1;
    height: 20px;
    margin: 0 2px 0 9px;
    border: 1px solid #999;
    background:
        repeating-linear-gradient(90deg, #aaa 0 1px, transparent 1px 130px) 0 5px / 100% 10px no-repeat border-box,
        repeating-linear-gradient(90deg, transparent 0 32px, #aaa 32px 33px, transparent 33px 65px, #aaa 65px 66px, transparent 66px 97px, #aaa 97px 98px, transparent 98px 130px) 0 7px / 100% 6px no-repeat border-box;
}

.editor {
    display: block;
    width: 474px;
    height: 127px;
    margin-left: 29px;
    overflow: hidden;
    resize: none;
    border: 1px solid #333;
    font: 88px/58px "Noto Sans", sans-serif;
    text-indent: -4px;
    color: #fff;
    outline: 0;
}

.text-cursor {
    position: absolute;
    left: 150px;
    top: 32px;
}

.grow {
    position: absolute;
    right: 16px;
    bottom: 2px;
}

.ucs {
    position: absolute;
    left: 10px;
    bottom: 7px;
    font: 300 18px Inter, sans-serif;
}

.command {
    display: flex;
    align-items: center;
    position: absolute;
    left: 569px;
    bottom: 1px;
    width: 406px;
    height: 26px;
    padding-left: 4px;
    border: 1px solid #555;
    border-radius: 2px;
    background: linear-gradient(#5b5b5b, #333);
}

.command .grip {
    width: 6px;
    height: 18px;
    background: radial-gradient(#999 40%, transparent 50%) 0 0 / 3px 3px;
}

.command button {
    width: 20px;
}

.prompt {
    flex: 1;
    display: flex;
    align-items: center;
    gap: 6px;
    align-self: stretch;
    margin-left: 3px;
    padding: 0 3px 0 23px;
    background-color: #b2b2b2;
    color: #111;
}

.prompt input {
    flex: 1;
    min-width: 0;
    font: bold 12px "DejaVu Sans Mono", monospace;
}

.prompt .caret {
    border-top-color: #666;
}

.prompt .caret.up {
    border-bottom-color: #111;
}

.palette {
    display: flex;
    flex-direction: column;
    align-items: center;
    width: 22px;
    margin: 5px 1px 5px 4px;
    padding-top: 2px;
    border: 1px solid #333;
    background: linear-gradient(90deg, #999, #707070);
}

.palette .grip {
    width: 10px;
    height: 4px;
}

.palette-title {
    margin: auto 0;
    writing-mode: vertical-rl;
    text-orientation: sideways;
    transform: rotate(180deg);
    font-size: 15px;
    line-height: 20px;
}

/* Status bar */
.status {
    display: flex;
    height: 27px;
    border-top: 1px solid #5b5b5b;
    background-color: #363636;
}

.layouts {
    display: flex;
    flex: 1;
    padding-left: 12px;
    color: #aaa;
}

.layouts a {
    width: 54px;
    height: 18px;
    background: linear-gradient(#505050, #606060);
    clip-path: polygon(0 0, 100% 0, calc(100% - 3px) 20%, calc(100% - 6px) 85%, calc(100% - 10px) 100%, 10px 100%, 6px 85%, 3px 20%);
    line-height: 18px;
    text-align: center;
}

.layouts a.active {
    width: 47px;
    background: linear-gradient(#666, #999);
    color: #fff;
    font-weight: 700;
}

.add-layout {
    width: 22px;
    height: 16px;
    margin-left: 3px;
    border-radius: 8px 2px 9px 2px;
    background-color: #505050;
    font-size: 16px;
    font-weight: 700;
}

.cell {
    display: flex;
    align-items: center;
    justify-content: space-evenly;
    min-width: 26px;
    margin-right: 1px;
    border: 1px solid #777;
    background-color: #4f4f4f;
    color: #fff;
}

.cell.joined {
    margin-right: 0;
    border-right: 0;
}

.coords {
    width: 182px;
    justify-content: flex-end;
    padding-right: 5px;
}

.cell:has(.model) {
    width: 29px;
}

.model {
    font-weight: 700;
}

.cell:has(.model) + .cell {
    width: 65px;
}

.snaps {
    width: 103px;
}

.osnap {
    width: 64px;
}

.notes {
    width: 106px;
    justify-content: space-around;
}

.ratio {
    padding-left: 4px;
}

.notes + .cell {
    width: 40px;
}

.wide {
    width: 32px;
}

.last {
    width: 51px;
    margin-right: 0;
}

.b {
    stroke: #2690ff;
    stroke-width: 2;
    fill: none;
}

.lit {
    filter: drop-shadow(0 0 2px #0a60d0);
}

.taskbar {
    display: flex;
    gap: 2px;
    height: 3px;
    padding: 1px 0 0 176px;
    background-color: #465a5a;
}

.taskbar span {
    width: 60px;
    background-color: #8e9c9c;
}
```
